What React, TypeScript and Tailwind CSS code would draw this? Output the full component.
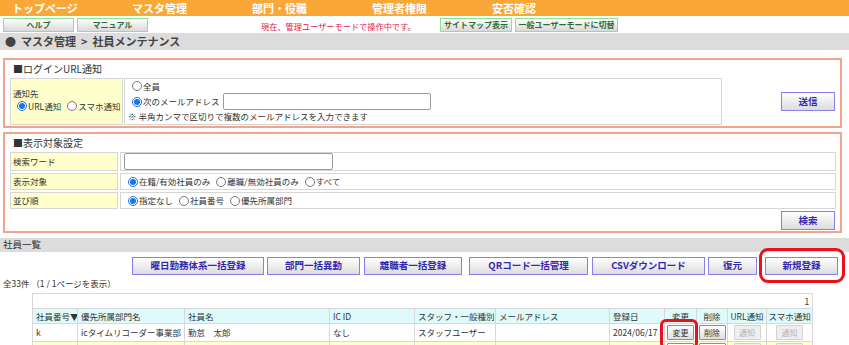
import React from "react";

function Radio({ checked = false, name }: { checked?: boolean; name: string }) {
  return (
    <input
      type="radio"
      name={name}
      defaultChecked={checked}
      className="m-0 w-[10px] h-[10px] shrink-0 accent-[#1a73e8]"
    />
  );
}

function GreenBtn({ children, w, ml }: { children: React.ReactNode; w: string; ml: string }) {
  return (
    <div
      className={`${w} ${ml} mt-[2px] h-[14px] border border-[#8fe08f] bg-linear-to-b from-white to-[#d9d9d9] text-[#2f6b3a] font-bold text-[8px] leading-none whitespace-nowrap overflow-hidden flex items-center justify-center`}
    >
      {children}
    </div>
  );
}

function PurpleBtn({ children, cls }: { children: React.ReactNode; cls: string }) {
  return (
    <div
      className={`${cls} border border-[#8a80ea] bg-linear-to-b from-white to-[#dcdcdc] text-[#3528b0] font-bold text-[9.5px] leading-none flex items-center justify-center shrink-0`}
    >
      {children}
    </div>
  );
}

function SmallBtn({ children, disabled = false }: { children?: React.ReactNode; disabled?: boolean }) {
  return (
    <div
      className={
        disabled
          ? "mx-auto w-[27px] h-[15px] border border-[#d2d2d2] bg-[#efefef] text-[#b4b4b4] text-[8px] leading-none flex items-center justify-center rounded-[1px]"
          : "mx-auto w-[27px] h-[15px] border border-[#8f8f8f] bg-linear-to-b from-white to-[#dedede] text-[#333] text-[8px] leading-none flex items-center justify-center rounded-[1px]"
      }
    >
      {children}
    </div>
  );
}

export default function App() {
  const th = "border border-[#d8d8d8] px-[3px] font-normal text-left whitespace-nowrap overflow-hidden";
  const thc = "border border-[#d8d8d8] px-0 font-normal text-center whitespace-nowrap overflow-hidden";
  const td = "border border-[#d8d8d8] px-[3px] whitespace-nowrap overflow-hidden";
  const tdc = "border border-[#d8d8d8] px-0 whitespace-nowrap align-top pt-[1px]";
  return (
    <div className="w-[849px] h-[345px] overflow-hidden bg-white text-[#333] font-['Noto_Sans_CJK_JP',sans-serif] text-[8.5px] leading-[1.2]">
      {/* top nav */}
      <div className="h-[16px] bg-[#f9a838] flex items-center">
        {["トップページ", "マスタ管理", "部門・役職", "管理者権限", "安否確認"].map((t) => (
          <div key={t} className="w-[120px] pl-[12px] text-white font-bold text-[11px] leading-none">
            {t}
          </div>
        ))}
      </div>

      {/* second row */}
      <div className="h-[17px] flex items-start">
        <GreenBtn w="w-[71px]" ml="ml-[3px]">ヘルプ</GreenBtn>
        <GreenBtn w="w-[71px]" ml="ml-[3px]">マニュアル</GreenBtn>
        <div className="ml-[113px] w-[179px] pt-[6px] text-[#e3174a] text-[8.2px] leading-none whitespace-nowrap">
          現在、管理ユーザーモードで操作中です。
        </div>
        <GreenBtn w="w-[72px]" ml="ml-0">サイトマップ表示</GreenBtn>
        <GreenBtn w="w-[103px]" ml="ml-[3px]">一般ユーザーモードに切替</GreenBtn>
      </div>

      {/* breadcrumb */}
      <div className="h-[17px] bg-[#dcdcdc] flex items-center pl-[5px] text-[11px] font-bold text-[#444] leading-none whitespace-pre">
        {"●  マスタ管理  >  社員メンテナンス"}
      </div>

      {/* login URL */}
      <div className="mt-[8px] ml-[3px] w-[839px] h-[70px] border-2 border-[#f2a58e]">
        <div className="h-[18px] flex items-center pl-[8px] text-[10px] leading-none">■ログインURL通知</div>
        <div className="flex items-center ml-[5px]">
          <div className="flex gap-[1px]">
            <div className="w-[113px] h-[47px] border border-[#d6d6d6] bg-[#ffffcc] pt-[8px]">
              <div className="h-[12px] pl-[2px] flex items-center">通知先</div>
              <div className="h-[12px] mt-[1px] pl-[6px] flex items-center whitespace-nowrap">
                <Radio name="t" checked />
                <span className="ml-[1px]">URL通知</span>
                <span className="ml-[6px]" />
                <Radio name="t" />
                <span className="ml-[1px]">スマホ通知</span>
              </div>
            </div>
            <div className="w-[598px] h-[47px] border border-[#d6d6d6] pt-[1px]">
              <div className="h-[12px] pl-[7px] flex items-center">
                <Radio name="m" />
                <span className="ml-[1px]">全員</span>
              </div>
              <div className="h-[17px] mt-[1px] pl-[7px] flex items-center">
                <Radio name="m" checked />
                <span className="ml-[1px]">次のメールアドレス</span>
                <div className="ml-[3px] w-[208px] h-[17px] border border-[#9a9a9a] rounded-[2px] bg-white" />
              </div>
              <div className="h-[12px] pl-[3px] flex items-center whitespace-nowrap">
                ※ 半角カンマで区切りで複数のメールアドレスを入力できます
              </div>
            </div>
          </div>
          <PurpleBtn cls="ml-auto mr-[5px] w-[54px] h-[19px]">送信</PurpleBtn>
        </div>
      </div>

      {/* display settings */}
      <div className="mt-[4px] ml-[3px] w-[839px] h-[101px] border-2 border-[#f2a58e]">
        <div className="h-[18px] flex items-center pl-[8px] text-[10px] leading-none">■表示対象設定</div>
        <div className="ml-[5px] flex flex-col gap-[2px]">
          <div className="flex gap-[2px] h-[19px]">
            <div className="w-[108px] border border-[#d6d6d6] bg-[#ffffcc] pl-[2px] flex items-center">検索ワード</div>
            <div className="w-[716px] border border-[#d6d6d6] pl-[3px] flex items-center">
              <div className="w-[209px] h-[17px] border border-[#9a9a9a] rounded-[2px] bg-white" />
            </div>
          </div>
          <div className="flex gap-[2px] h-[17px]">
            <div className="w-[108px] border border-[#d6d6d6] bg-[#ffffcc] pl-[2px] flex items-center">表示対象</div>
            <div className="w-[716px] border border-[#d6d6d6] pl-[7px] flex items-center whitespace-nowrap">
              <Radio name="d" checked />
              <span className="ml-[1px]">在籍/有効社員のみ</span>
              <span className="ml-[6px]" />
              <Radio name="d" />
              <span className="ml-[1px]">離職/無効社員のみ</span>
              <span className="ml-[6px]" />
              <Radio name="d" />
              <span className="ml-[1px]">すべて</span>
            </div>
          </div>
          <div className="flex gap-[2px] h-[17px]">
            <div className="w-[108px] border border-[#d6d6d6] bg-[#ffffcc] pl-[2px] flex items-center">並び順</div>
            <div className="w-[716px] border border-[#d6d6d6] pl-[7px] flex items-center whitespace-nowrap">
              <Radio name="o" checked />
              <span className="ml-[1px]">指定なし</span>
              <span className="ml-[6px]" />
              <Radio name="o" />
              <span className="ml-[1px]">社員番号</span>
              <span className="ml-[6px]" />
              <Radio name="o" />
              <span className="ml-[1px]">優先所属部門</span>
            </div>
          </div>
        </div>
        <div className="flex justify-end mt-[2px] pr-[5px]">
          <PurpleBtn cls="w-[54px] h-[19px]">検索</PurpleBtn>
        </div>
      </div>

      {/* list header bar */}
      <div className="mt-[5px] h-[14px] bg-[#dcdcdc] pl-[3px] flex items-center text-[9.5px] leading-none">社員一覧</div>

      {/* action buttons */}
      <div className="mt-[5px] h-[18px] flex">
        <PurpleBtn cls="ml-[132px] w-[132px] h-[18px]">曜日勤務体系一括登録</PurpleBtn>
        <PurpleBtn cls="ml-[3px] w-[93px] h-[18px]">部門一括異動</PurpleBtn>
        <PurpleBtn cls="ml-[4px] w-[98px] h-[18px]">離職者一括登録</PurpleBtn>
        <PurpleBtn cls="ml-[7px] w-[119px] h-[18px]">QRコード一括管理</PurpleBtn>
        <PurpleBtn cls="ml-[4px] w-[113px] h-[18px]">CSVダウンロード</PurpleBtn>
        <PurpleBtn cls="ml-[3px] w-[49px] h-[18px]">復元</PurpleBtn>
        <div className="relative ml-[8px]">
          <PurpleBtn cls="w-[73px] h-[18px]">新規登録</PurpleBtn>
          <div className="absolute left-[-6px] top-[-9px] w-[86px] h-[35px] border-[3px] border-[#e8121c] rounded-[9px]" />
        </div>
      </div>

      <div className="h-[14px] pl-[3px] flex items-center mt-[1px]">全33件 （1 / 1ページを表示）</div>

      {/* table */}
      <div className="mt-[3px] ml-[32px] w-[780px]">
        <table className="w-[780px] table-fixed border-collapse text-[8.5px] leading-none">
          <colgroup>
            <col className="w-[45px]" />
            <col className="w-[107px]" />
            <col className="w-[145px]" />
            <col className="w-[85px]" />
            <col className="w-[81px]" />
            <col className="w-[114px]" />
            <col className="w-[55px]" />
            <col className="w-[32px]" />
            <col className="w-[31px]" />
            <col className="w-[39px]" />
            <col className="w-[46px]" />
          </colgroup>
          <tbody>
            <tr className="h-[15px]">
              <td colSpan={11} className="border border-[#d8d8d8] text-right pr-[3px]">1</td>
            </tr>
            <tr className="h-[15px] bg-[#dffafa]">
              <th className={th}>社員番号▼</th>
              <th className={th}>優先所属部門名</th>
              <th className={th}>社員名</th>
              <th className={th}>IC ID</th>
              <th className={th}>スタッフ・一般種別</th>
              <th className={th}>メールアドレス</th>
              <th className={th}>登録日</th>
              <th className={thc}>変更</th>
              <th className={thc}>削除</th>
              <th className={thc}>URL通知</th>
              <th className={thc}>スマホ通知</th>
            </tr>
            <tr className="h-[18px]">
              <td className={td}>k</td>
              <td className={td}>icタイムリコーダー事業部</td>
              <td className={td}>勤怠　太郎</td>
              <td className={td}>なし</td>
              <td className={td}>スタッフユーザー</td>
              <td className={td}></td>
              <td className={td}>2024/06/17</td>
              <td className={tdc}>
                <div className="relative w-[27px] mx-auto">
                  <SmallBtn>変更</SmallBtn>
                  <div className="absolute left-[-7px] top-[-6px] w-[38px] h-[30px] border-[3px] border-[#e8121c] rounded-[6px]" />
                </div>
              </td>
              <td className={tdc}><SmallBtn>削除</SmallBtn></td>
              <td className={tdc}><SmallBtn disabled>通知</SmallBtn></td>
              <td className={tdc}><SmallBtn disabled>通知</SmallBtn></td>
            </tr>
            <tr className="h-[18px] bg-[#ffffcc]">
              <td className={td}></td>
              <td className={td}></td>
              <td className={td}></td>
              <td className={td}></td>
              <td className={td}></td>
              <td className={td}></td>
              <td className={td}></td>
              <td className={tdc}><SmallBtn /></td>
              <td className={tdc}><SmallBtn /></td>
              <td className={tdc}><SmallBtn disabled /></td>
              <td className={tdc}><SmallBtn disabled /></td>
            </tr>
          </tbody>
        </table>
      </div>
    </div>
  );
}
